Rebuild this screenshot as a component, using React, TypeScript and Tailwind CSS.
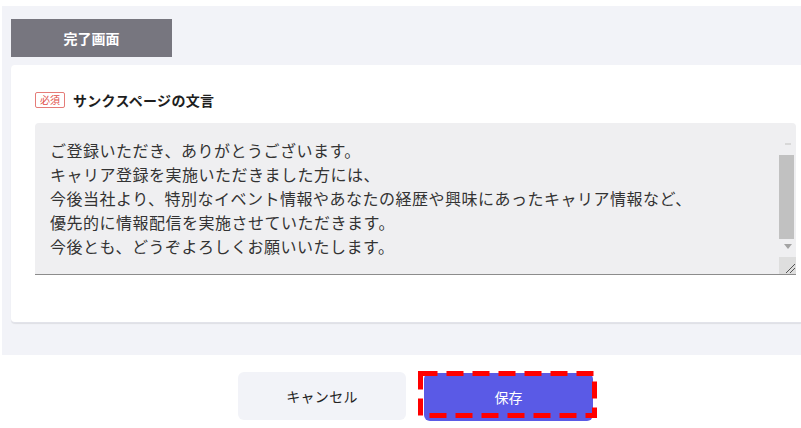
import React from "react";

const lines = [
  "ご登録いただき、ありがとうございます。",
  "キャリア登録を実施いただきました方には、",
  "今後当社より、特別なイベント情報やあなたの経歴や興味にあったキャリア情報など、",
  "優先的に情報配信を実施させていただきます。",
  "今後とも、どうぞよろしくお願いいたします。",
];

export default function App() {
  return (
    <div className="w-[801px] h-[428px] bg-white overflow-hidden font-['Noto_Sans_CJK_JP','Noto_Sans',sans-serif] text-[#222]">
      <div className="ml-[2px] mt-[6px] h-[349px] bg-[#f2f3f8] pl-[9px] pt-[13px] flex flex-col">
        <div className="w-[161px] h-[38px] bg-[#77767f] text-white font-bold text-[14px] flex items-center justify-center">
          完了画面
        </div>
        <div className="mt-[8px] h-[258px] bg-white rounded-l-[4px] shadow-[0_1px_1px_rgba(0,0,0,0.08)] border-b border-[#e2e3ea] pt-[27px] pl-[24px] pr-[5px]">
          <div className="flex items-center gap-[8px] h-[16px]">
            <span className="w-[30px] h-[16px] border border-[#e57c78] rounded-[2px] text-[#e0504a] text-[10px] leading-none flex items-center justify-center">
              必須
            </span>
            <span className="font-bold text-[14px] tracking-[0.3px] text-[#1e1e1e]">サンクスページの文言</span>
          </div>
          <div className="mt-[15px] h-[152px] flex bg-[#efeff1] rounded-t-[4px] border-b border-[#8c8c8c]">
            <div className="flex-1 pl-[15px] pt-[15px] text-[16px] leading-[24px] tracking-[0.5px] text-[#333] whitespace-nowrap overflow-hidden">
              {lines.map((l, i) => (
                <div key={i}>{l}</div>
              ))}
            </div>
            <div className="w-[17px] flex flex-col">
              <div className="h-[32px] flex items-end justify-center pb-[10px]">
                <div className="w-[6px] h-[2px] bg-[#d8d8d8]"></div>
              </div>
              <div className="h-[84px] mr-[2px] bg-[#c1c1c1]"></div>
              <div className="h-[15px] flex items-center justify-center">
                <div className="w-0 h-0 border-l-[4px] border-r-[4px] border-t-[5px] border-l-transparent border-r-transparent border-t-[#a3a3a3]"></div>
              </div>
              <div className="flex-1"></div>
              <div className="h-[17px] bg-[#dedede] flex items-end justify-end">
                <svg width="14" height="14" viewBox="0 0 14 14">
                  <line x1="4" y1="13" x2="13" y2="4" stroke="#555" strokeWidth="1" />
                  <line x1="8" y1="13" x2="13" y2="8" stroke="#555" strokeWidth="1" />
                </svg>
              </div>
            </div>
          </div>
        </div>
      </div>
      <div className="mt-[17px] flex justify-center gap-[18px] pl-[30px]">
        <button className="w-[168px] h-[48px] bg-[#f2f3f8] rounded-[6px] text-[14px] tracking-[0.3px] text-[#222]">
          キャンセル
        </button>
        <div className="relative mt-[1px]">
          <button className="w-[169px] h-[48px] bg-[#5a5ae6] rounded-[6px] text-[14px] text-white">
            保存
          </button>
          <svg
            className="absolute left-[-6px] top-[-2px] pointer-events-none"
            width="179"
            height="47"
            viewBox="0 0 179 47"
          >
            <rect
              x="2.5"
              y="2.5"
              width="174"
              height="42"
              fill="none"
              stroke="#ff0000"
              strokeWidth="5"
              strokeDasharray="17 9"
            />
          </svg>
        </div>
      </div>
    </div>
  );
}
